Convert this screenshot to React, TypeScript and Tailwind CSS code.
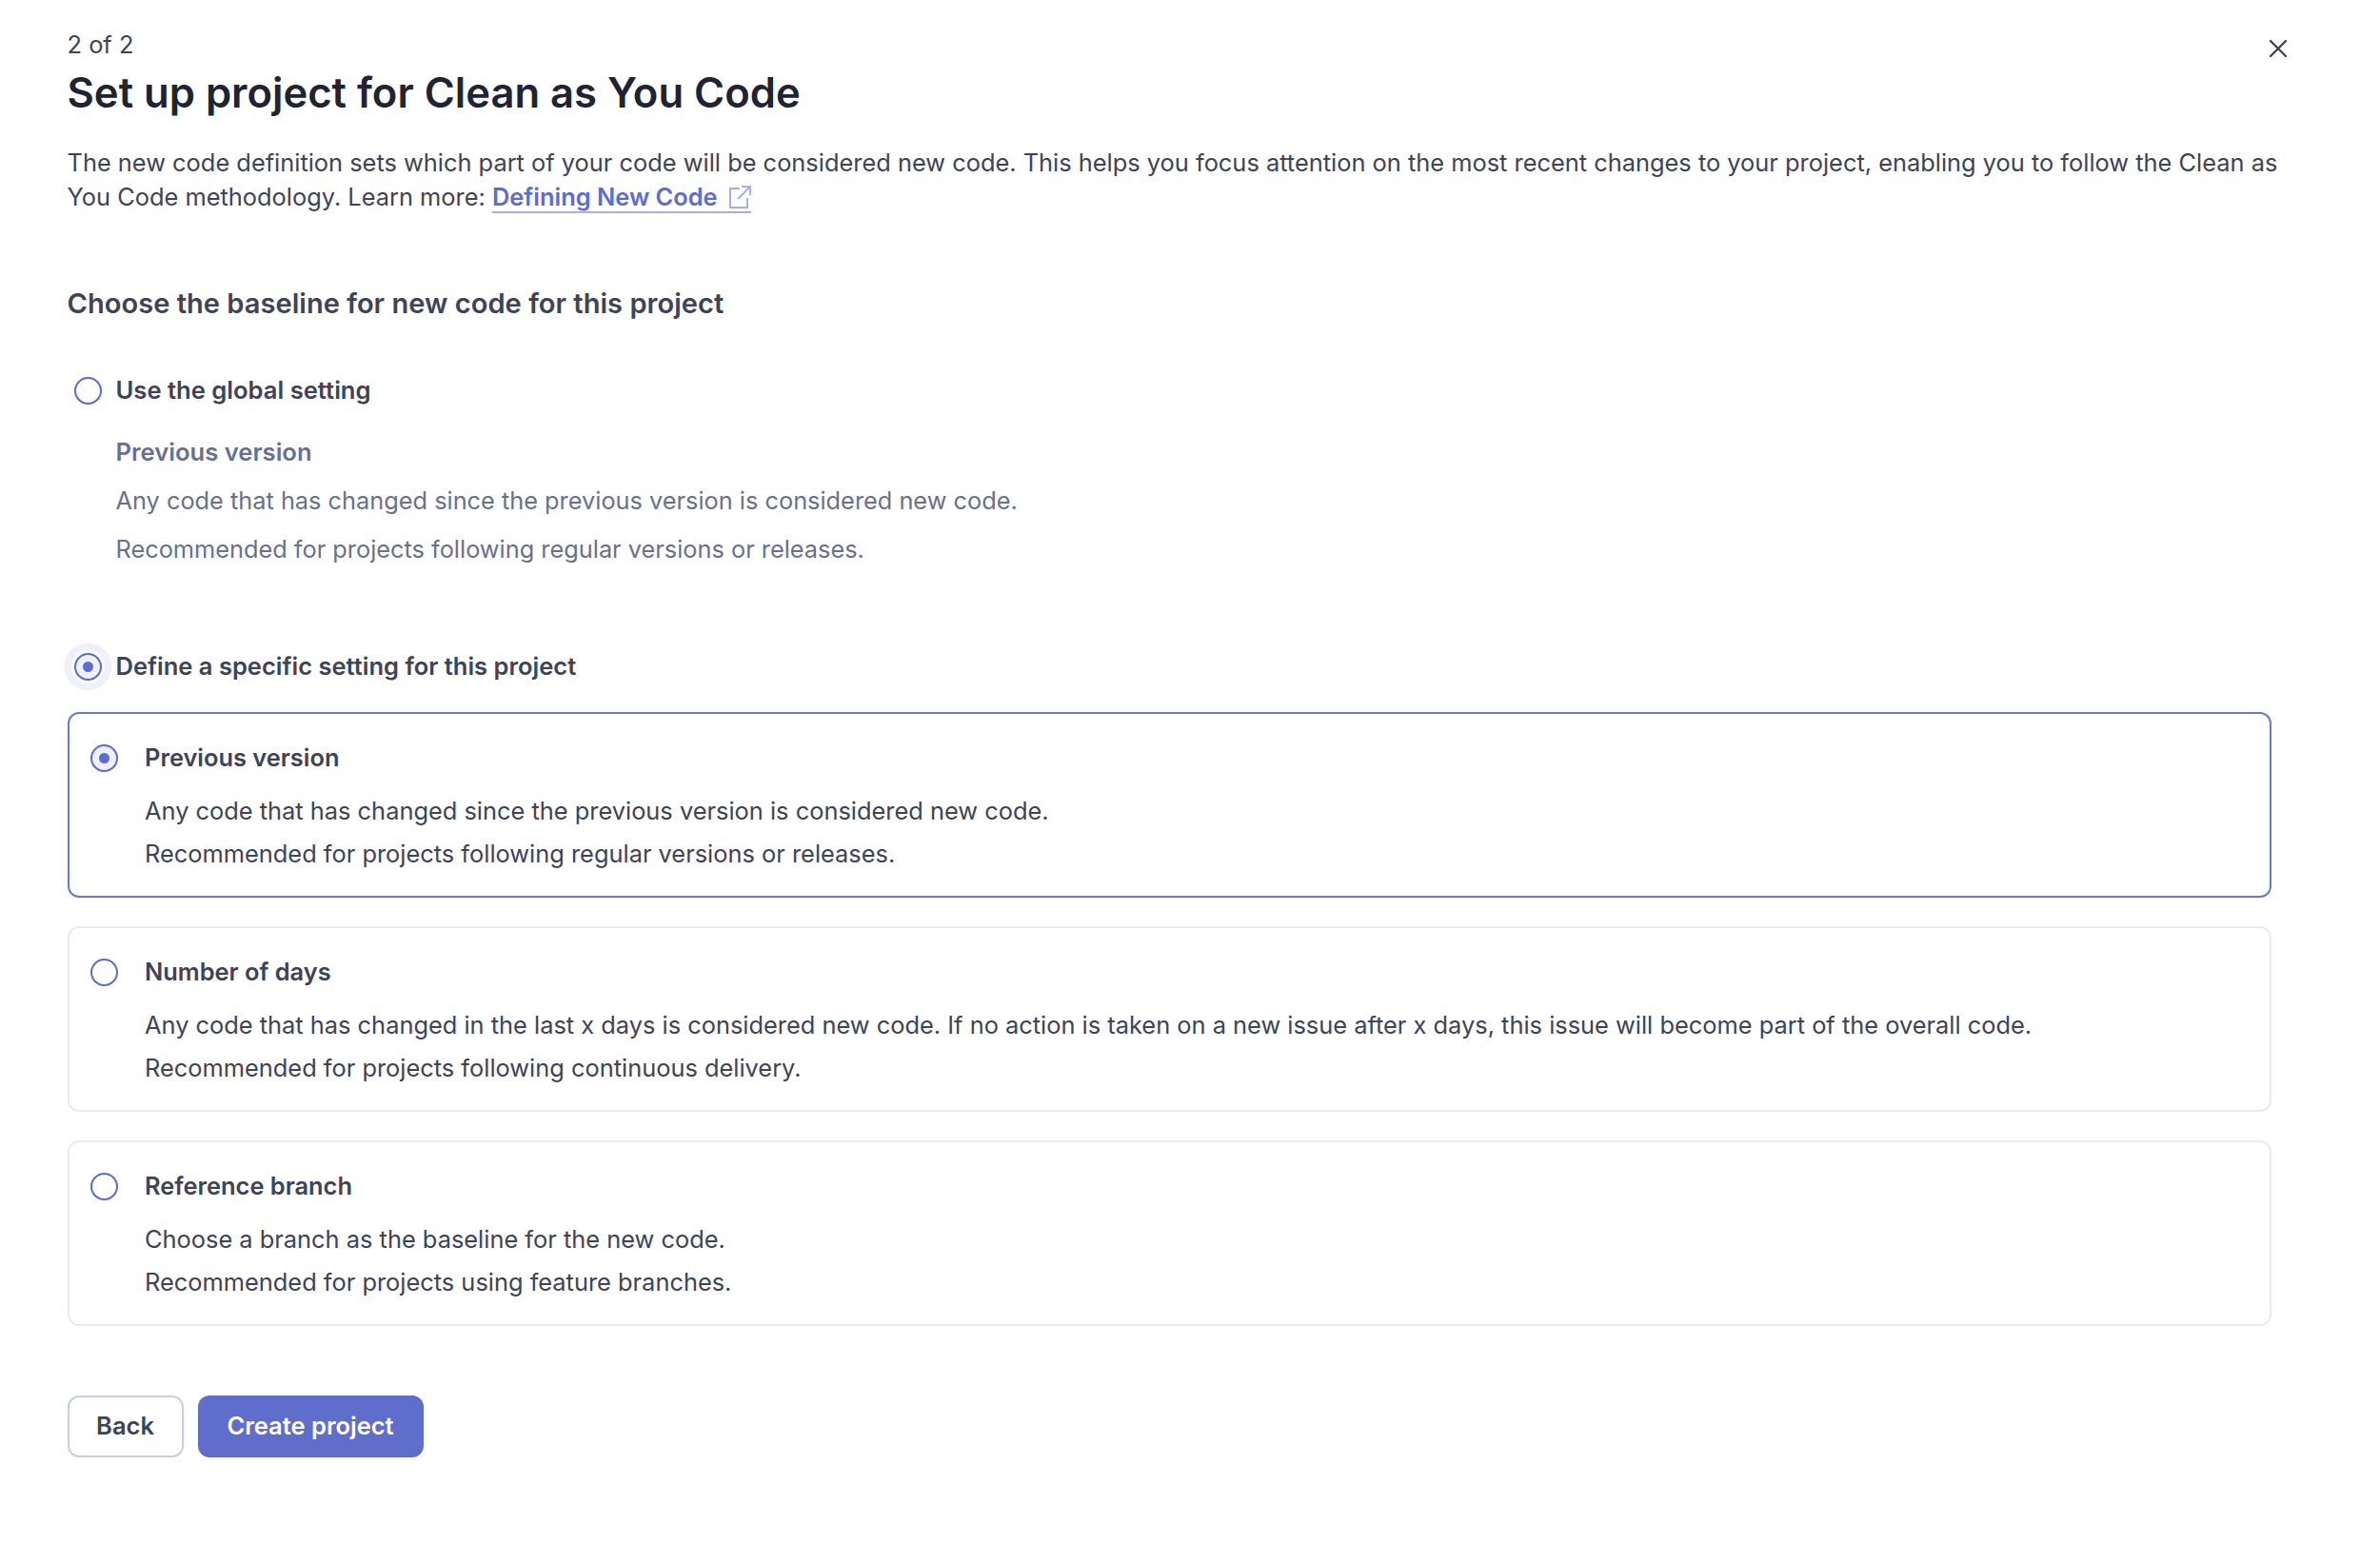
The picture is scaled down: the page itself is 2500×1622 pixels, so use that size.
function Radio({ checked, halo }: { checked?: boolean; halo?: boolean }) {
  return (
    <span
      className={
        "flex h-[29px] w-[29px] shrink-0 items-center justify-center rounded-full border-2 border-[#5d6cd0] " +
        (checked ? "bg-[#eef0fb] " : "bg-white ") +
        (halo ? "shadow-[0_0_0_3px_#ffffff,0_0_0_10.5px_#eef0fb]" : "")
      }
    >
      {checked && <span className="h-[11px] w-[11px] rounded-full bg-[#5d6cd0]" />}
    </span>
  )
}

function OptionCard({
  title,
  lines,
  selected,
}: {
  title: string
  lines: string[]
  selected?: boolean
}) {
  return (
    <div
      className={
        "h-[195px] rounded-[12px] border-2 pl-[22px] pt-[31px] " +
        (selected ? "border-[#6b78d3]" : "border-[#e8ebf2]")
      }
    >
      <div className="flex h-[32px] items-center">
        <Radio checked={selected} />
        <span className="ml-[28.5px] text-[25.4px] font-semibold text-[#3e4357]">{title}</span>
      </div>
      <div className="ml-[57.5px] mt-[16.5px] text-[25.4px] leading-[45px] text-[#3e4357]">
        {lines.map((line) => (
          <p key={line}>{line}</p>
        ))}
      </div>
    </div>
  )
}

export default function App() {
  return (
    <main className="relative h-[1622px] w-[2500px] bg-white pl-[70.5px] pr-[114px] font-['Inter',sans-serif] text-[#3e4357]">
      <button className="absolute right-[97px] top-[41px] text-[#3e4357]">
        <svg width="20" height="20" viewBox="0 0 20 20" fill="none" stroke="currentColor" strokeWidth="2.4" strokeLinecap="round">
          <path d="M2 2 L18 18 M18 2 L2 18" />
        </svg>
      </button>

      <p className="pt-[30px] text-[25.4px] leading-[34px]">2 of 2</p>
      <h1 className="mt-[3.5px] text-[43.6px] font-semibold leading-[60px] text-[#1f2334]">
        Set up project for Clean as You Code
      </h1>
      <p className="mt-[25px] w-[2340px] text-[25.4px] leading-[36px]">
        The new code definition sets which part of your code will be considered new code. This helps you focus attention on the most recent changes to your project, enabling you to follow the Clean as You Code methodology. Learn more:{" "}
        <a className="border-b-2 border-[#a5adea] font-semibold text-[#5d6cd0]">
          Defining New Code
          <svg className="ml-[11px] inline align-[-4px]" width="24" height="26" viewBox="0 0 24 26" fill="none" stroke="#a5adea" strokeWidth="2">
            <path d="M12 4 H2 V24 H20 V14 M14 2 H23 V11 M23 2 L10 15" />
          </svg>
        </a>
      </p>

      <h2 className="mt-[74px] text-[29.1px] font-semibold leading-[40px] text-[#3e4357]">
        Choose the baseline for new code for this project
      </h2>

      <div className="mt-[56px] flex h-[32px] items-center pl-[7px]">
        <Radio />
        <span className="ml-[15px] text-[25.6px] font-semibold">Use the global setting</span>
      </div>
      <div className="ml-[51px] mt-[31px] text-[25.33px] text-[#69708f]">
        <p className="text-[25.6px] font-semibold leading-[34px]">Previous version</p>
        <p className="mt-[17px] leading-[34px]">Any code that has changed since the previous version is considered new code.</p>
        <p className="mt-[17px] leading-[34px]">Recommended for projects following regular versions or releases.</p>
      </div>

      <div className="mt-[91px] flex h-[32px] items-center pl-[7px]">
        <Radio checked halo />
        <span className="ml-[15px] text-[25.5px] font-semibold">Define a specific setting for this project</span>
      </div>

      <div className="mt-[31px] flex flex-col gap-[30px]">
        <OptionCard
          selected
          title="Previous version"
          lines={[
            "Any code that has changed since the previous version is considered new code.",
            "Recommended for projects following regular versions or releases.",
          ]}
        />
        <OptionCard
          title="Number of days"
          lines={[
            "Any code that has changed in the last x days is considered new code. If no action is taken on a new issue after x days, this issue will become part of the overall code.",
            "Recommended for projects following continuous delivery.",
          ]}
        />
        <OptionCard
          title="Reference branch"
          lines={[
            "Choose a branch as the baseline for the new code.",
            "Recommended for projects using feature branches.",
          ]}
        />
      </div>

      <div className="mt-[73px] flex gap-[15px]">
        <button className="h-[65px] w-[122px] rounded-[12px] border-2 border-[#c5d0e4] bg-white text-[25.5px] font-semibold text-[#3e4357]">
          Back
        </button>
        <button className="h-[65px] w-[237px] rounded-[12px] bg-[#5f6dcb] text-[25.5px] font-semibold text-white">
          Create project
        </button>
      </div>
    </main>
  )
}
